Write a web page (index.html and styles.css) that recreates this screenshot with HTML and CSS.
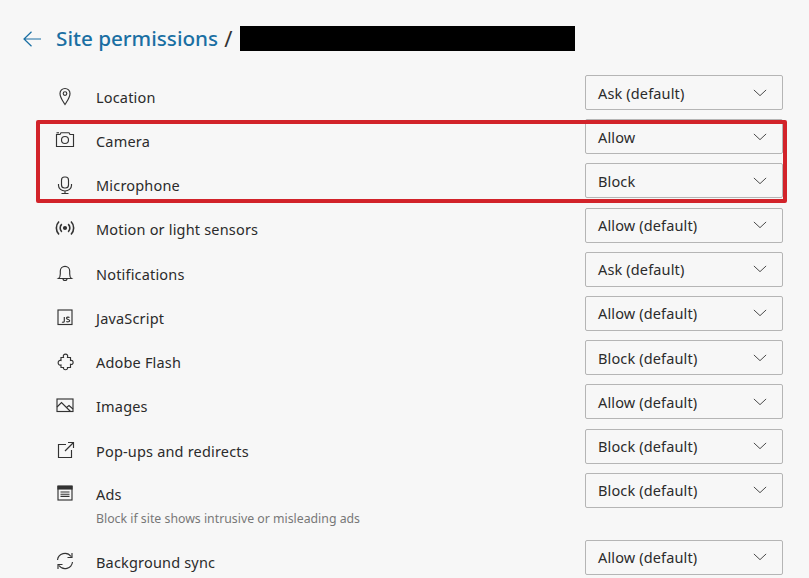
FILE: index.html
```html
<!DOCTYPE html>
<html lang="en">
<head>
    <meta charset="UTF-8">
    <meta name="viewport" content="width=device-width, initial-scale=1.0">
    <title>Site permissions</title>
    <link rel="stylesheet" href="styles.css">
</head>
<body>
    <svg class="sprite" width="0" height="0">
        <symbol id="chevron" viewBox="0 0 16 9"><path d="M1 1l7 6.500L15 1"/></symbol>
    </svg>
    <div class="page">
        <header class="header">
            <svg class="back" viewBox="0 0 18 16"><path d="M8.500 .8L1 8l7.500 7.200M1 8h17"/></svg>
            <h1 class="title">Site permissions</h1>
            <span class="slash">/</span>
            <div class="redacted"></div>
        </header>

        <div class="list">
            <div class="row">
                <div class="info">
                    <svg class="icon" viewBox="0 0 20 20"><path d="M10 18.500C7.500 14.500 5 11.500 5 7.500a5 5 0 0 1 10 0c0 4-2.500 7-5 11z"/><circle cx="10" cy="7.500" r="1.800"/></svg>
                    <div class="label">Location</div>
                </div>
                <div class="select">Ask (default)<svg class="chevron"><use href="#chevron"/></svg></div>
            </div>
            <div class="row">
                <div class="info">
                    <svg class="icon" viewBox="0 0 20 20"><path d="M1.500 4.500h3.500l1-1.800h8l1 1.800h3.500v12h-17z"/><circle cx="10" cy="10" r="3.500"/><path d="M1.500 2.800h2.500"/></svg>
                    <div class="label">Camera</div>
                </div>
                <div class="select">Allow<svg class="chevron"><use href="#chevron"/></svg></div>
            </div>
            <div class="row">
                <div class="info">
                    <svg class="icon" viewBox="0 0 20 20"><rect x="6.500" y="3" width="7" height="11" rx="3"/><path d="M3.500 10v1.500c0 3 3 5.500 6.500 5.500s6.500-2.500 6.500-5.500V10M10 17v2.500M6.500 19.500h7"/></svg>
                    <div class="label">Microphone</div>
                </div>
                <div class="select">Block<svg class="chevron"><use href="#chevron"/></svg></div>
            </div>
            <div class="row row-motion">
                <div class="info">
                    <svg class="icon icon-bold" viewBox="0 0 20 20"><circle class="fill" cx="10" cy="10" r="1.300"/><path d="M6.800 6.200a5.200 5.200 0 0 0 0 7.600M13.200 6.200a5.200 5.200 0 0 1 0 7.600M4 3.500a9.300 9.300 0 0 0 0 13M16 3.500a9.300 9.300 0 0 1 0 13"/></svg>
                    <div class="label">Motion or light sensors</div>
                </div>
                <div class="select">Allow (default)<svg class="chevron"><use href="#chevron"/></svg></div>
            </div>
            <div class="row">
                <div class="info">
                    <svg class="icon" viewBox="0 0 20 20"><path d="M3.500 15.500c1.500-1 1.800-2.500 1.800-4.500V8a4.700 4.700 0 0 1 9.400 0v3c0 2 .3 3.500 1.800 4.500zM8 15.500a2 2 0 0 0 4 0"/></svg>
                    <div class="label">Notifications</div>
                </div>
                <div class="select">Ask (default)<svg class="chevron"><use href="#chevron"/></svg></div>
            </div>
            <div class="row">
                <div class="info">
                    <svg class="icon" viewBox="0 0 20 20"><rect x="3" y="3" width="14" height="14.500"/><path d="M9.300 10v4.200c0 1-1.300 1.300-2.300.8M14.500 10.500c-1-.7-3-.5-3 .7 0 1.500 3.200 1 3.200 2.500 0 1.200-2.200 1.400-3.400.7"/></svg>
                    <div class="label">JavaScript</div>
                </div>
                <div class="select">Allow (default)<svg class="chevron"><use href="#chevron"/></svg></div>
            </div>
            <div class="row">
                <div class="info">
                    <svg class="icon" viewBox="0 0 20 20"><path d="M6 6.500h2.500c-1.500-4.500 5.500-4.500 4 0h3v3c3.500-1.200 3.500 5 0 3.800v3.200h-3c1 3-5 3-4 0H6V14c-3.800 1.200-3.800-5.500 0-4.500z"/></svg>
                    <div class="label">Adobe Flash</div>
                </div>
                <div class="select">Block (default)<svg class="chevron"><use href="#chevron"/></svg></div>
            </div>
            <div class="row">
                <div class="info">
                    <svg class="icon" viewBox="0 0 20 20"><rect x="2" y="4" width="16" height="12.500"/><path d="M2 12l4.500-4.500 9 9M11.500 12.500l2.500-2 4 3.500"/></svg>
                    <div class="label">Images</div>
                </div>
                <div class="select">Allow (default)<svg class="chevron"><use href="#chevron"/></svg></div>
            </div>
            <div class="row">
                <div class="info">
                    <svg class="icon" viewBox="0 0 20 20"><path d="M11 4.500H3.500v13h13V10M10 11l8-8M13 2.500h5.500V8"/></svg>
                    <div class="label">Pop-ups and redirects</div>
                </div>
                <div class="select">Block (default)<svg class="chevron"><use href="#chevron"/></svg></div>
            </div>
            <div class="row row-ads">
                <div class="info">
                    <svg class="icon" viewBox="0 0 20 20"><rect x="3" y="3.500" width="14" height="13.500"/><rect class="fill" x="3" y="3" width="14" height="3"/><path d="M5.500 9h9M5.500 11.200h9M5.500 13.400h9"/></svg>
                    <div>
                        <div class="label">Ads</div>
                        <div class="desc">Block if site shows intrusive or misleading ads</div>
                    </div>
                </div>
                <div class="select">Block (default)<svg class="chevron"><use href="#chevron"/></svg></div>
            </div>
            <div class="row">
                <div class="info">
                    <svg class="icon" viewBox="0 0 20 20"><path d="M2.500 9A7.500 7.500 0 0 1 16 5.500M17 2v4.500h-4.500M17.500 11A7.500 7.500 0 0 1 4 14.500M3 18v-4.500h4.500"/></svg>
                    <div class="label">Background sync</div>
                </div>
                <div class="select">Allow (default)<svg class="chevron"><use href="#chevron"/></svg></div>
            </div>
        </div>

        <div class="highlight"></div>
    </div>
</body>
</html>
```

FILE: styles.css
```css
html, body {
    margin: 0;
    height: 100%;
    overflow: hidden;
}
body {
    font-family: "Noto Sans", "Open Sans", sans-serif;
    background: #f7f7f7;
    color: #2b2b2b;
}
.sprite {
    position: absolute;
}
.page {
    position: relative;
    padding: 26px 26px 0 23px;
}
.header {
    display: flex;
    align-items: center;
    height: 25px;
    margin-bottom: 24px;
}
.back {
    width: 18px;
    height: 16px;
    margin-right: 15px;
    fill: none;
    stroke: #1a6fa3;
    stroke-width: 1.2;
}
.title {
    margin: 0;
    padding-bottom: 2px;
    font-size: 20.7px;
    font-weight: 500;
    color: #1a6fa3;
}
.slash {
    margin: 0 8px 0 6px;
    padding-bottom: 2px;
    font-size: 22px;
    color: #333;
}
.redacted {
    width: 335px;
    height: 25px;
    background: #000;
}
.list {
    display: flex;
    flex-direction: column;
    gap: 9.2px;
    padding-left: 33px;
}
.row {
    display: flex;
    justify-content: space-between;
    align-items: flex-start;
}
.row-ads {
    margin-bottom: 4px;
}
.row-ads .info {
    padding-top: 11px;
}
.row-motion .info {
    padding-top: 11px;
}
.info {
    display: flex;
    padding-top: 12px;
}
.icon {
    flex: none;
    width: 20px;
    height: 20px;
    margin: -1px 21px 0 -1px;
    fill: none;
    stroke: #333;
    stroke-width: 1.15;
}
.icon-bold {
    stroke-width: 1.6;
}
.icon .fill {
    fill: #333;
}
.label {
    font-size: 14.5px;
    line-height: 20px;
    letter-spacing: .18px;
}
.desc {
    margin-top: 7px;
    font-size: 12.3px;
    line-height: 16px;
    color: #777;
}
.select {
    box-sizing: border-box;
    display: flex;
    justify-content: space-between;
    align-items: center;
    width: 198px;
    height: 35px;
    padding: 0 15px 0 12px;
    border: 1px solid #b5b5b5;
    border-radius: 2px;
    font-size: 14.5px;
    letter-spacing: .14px;
    background: #f7f7f7;
}
.chevron {
    width: 14px;
    height: 8px;
    fill: none;
    stroke: #444;
    stroke-width: 1.1;
}
/* red box drawn over the camera and microphone rows */
.highlight {
    position: absolute;
    left: 36px;
    top: 120px;
    width: 743px;
    height: 75px;
    border: 4px solid #d2232a;
    border-radius: 2px;
}
```
